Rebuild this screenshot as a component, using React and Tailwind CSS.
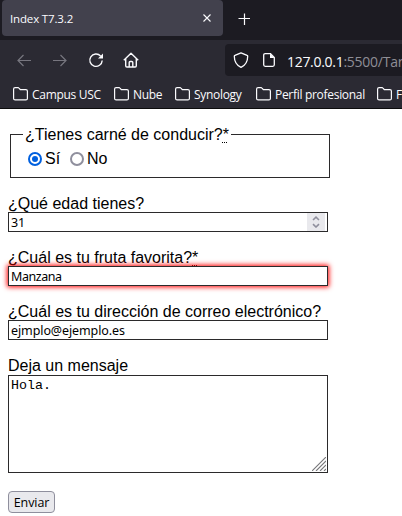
const SANS = "font-['Open_Sans','Noto_Sans',sans-serif]";

function Folder() {
  return (
    <svg className="h-[14px] w-[15px] shrink-0" viewBox="0 0 15 14" fill="none" stroke="#fbfbfe" strokeWidth="1.2">
      <path d="M.6 11.4V2.1Q.6.6 2.1.6H5Q5.600.6 6 1.100L7.300 2.600H12.900Q14.400 2.600 14.400 4.100V11.400Q14.400 12.900 12.900 12.900H2.100Q.6 12.900.6 11.400Z" />
    </svg>
  );
}

function Bookmark({ label, className }) {
  return (
    <div className={`flex h-[18px] shrink-0 items-center gap-1 ${className}`}>
      <Folder />
      <span className="pt-[2px] whitespace-nowrap">{label}</span>
    </div>
  );
}

function Field({ label, required, children }) {
  return (
    <div className="mt-4 flex flex-col">
      <label className="h-[18px] leading-5">
        {label}
        {required && <Required />}
      </label>
      {children}
    </div>
  );
}

function Required() {
  return <abbr className="underline decoration-dotted decoration-1 underline-offset-[2px]">*</abbr>;
}

function Radio({ checked }) {
  return (
    <span className={`flex size-[14px] items-center justify-center rounded-full border-2 bg-white ${checked ? "border-[#0060df]" : "border-[#8f8f9d]"}`}>
      {checked && <span className="size-[6px] rounded-full bg-[#0060df]" />}
    </span>
  );
}

const BOX = "relative h-5 w-[320px] border border-[#2b2a2b] bg-white pl-[2px] text-[12.5px] leading-5 tracking-[-0.1px] font-['Noto_Sans','Open_Sans',sans-serif]";

export default function App() {
  return (
    <div className="h-[516px] w-[402px] overflow-hidden bg-white font-['Liberation_Sans',Arial,sans-serif] text-base text-black">
      <header className={`h-[109px] border-b border-[#0c0c0d] bg-[#2b2a33] text-[#fbfbfe] ${SANS}`}>
        <div className="flex h-10 items-start bg-[#1c1b22] pl-[2px]">
          <div className="flex h-9 w-[221px] items-center justify-between rounded-[4px] bg-[#42414d] pr-3 pl-2">
            <span className="pt-[2px] text-[11.500px] tracking-[-0.15px]">Index T7.3.2</span>
            <svg className="size-2" viewBox="0 0 8 8" stroke="#fbfbfe" strokeWidth="1.1"><path d="M.5.5l7 7M7.500.5l-7 7" /></svg>
          </div>
          <svg className="mt-[13px] ml-[15px] size-3" viewBox="0 0 12 12" stroke="#fbfbfe" strokeWidth="1.2"><path d="M6.500 .5v12M.5 5.500h12" /></svg>
        </div>
        <div className="flex h-10 items-center">
          <svg className="ml-[17px] h-[14px] w-[14px]" viewBox="0 0 14 14" fill="none" stroke="#77767f" strokeWidth="1.2"><path d="M14 7.500H1M6.500 2L1 7.500L6.500 13" /></svg>
          <svg className="ml-[22px] h-[14px] w-[14px]" viewBox="0 0 14 14" fill="none" stroke="#77767f" strokeWidth="1.2"><path d="M0 7.500H13M7.500 2L13 7.500L7.500 13" /></svg>
          <svg className="ml-[21px] h-4 w-4" viewBox="0 0 16 16" fill="none" stroke="#fbfbfe" strokeWidth="1.4"><path d="M12.600 4A6.200 6.200 0 1 0 14.200 8.500" /><path d="M15 1.500V6.500H10Z" fill="#fbfbfe" stroke="none" /></svg>
          <svg className="ml-[19px] h-4 w-4" viewBox="0 0 16 16" fill="none" stroke="#fbfbfe" strokeWidth="1.4" strokeLinejoin="round"><path d="M.8 8.200L8 1.200L15.200 8.200M2.700 6.800V13.800Q2.700 15 3.900 15H12.100Q13.300 15 13.300 13.800V6.800M6.200 15V10.500Q6.200 9.500 7.200 9.500H8.800Q9.800 9.500 9.800 10.500V15" /></svg>
          <div className="ml-[86px] flex h-8 flex-1 items-center overflow-hidden rounded-l-[4px] bg-[#1c1b22] pl-2">
            <svg className="h-4 w-4 shrink-0" viewBox="0 0 16 16" fill="none" stroke="#fbfbfe" strokeWidth="1.3" strokeLinejoin="round"><path d="M8 .8L14.100 3.300Q14.700 3.500 14.700 4.200C14.700 9.500 12.300 13.300 8 15.300C3.700 13.300 1.300 9.500 1.300 4.200Q1.300 3.500 1.900 3.300Z" /></svg>
            <svg className="ml-[14px] h-[14px] w-3 shrink-0" viewBox="0 0 12 14" fill="none" stroke="#fbfbfe" strokeWidth="1.3"><path d="M7.500.7H2.200Q.7.7.7 2.200V11.800Q.7 13.300 2.200 13.300H9.800Q11.300 13.300 11.300 11.800V4.500Z" /><path d="M7 .5V5H11.500Z" fill="#fbfbfe" stroke="none" /></svg>
            <span className="ml-[12px] pt-[2px] text-[14px] tracking-[-0.3px] whitespace-nowrap">127.0.0.1<span className="tracking-[-0.25px] text-[#8f8e96]">:5500/Tare</span></span>
          </div>
        </div>
        <div className="flex h-7 items-center overflow-hidden pl-[13px] text-[12px] tracking-[-0.3px]">
          <Bookmark label="Campus USC" className="w-[101px]" />
          <Bookmark label="Nube" className="w-[61px]" />
          <Bookmark label="Synology" className="w-[81px]" />
          <Bookmark label="Perfil profesional" className="w-[121px]" />
          <Bookmark label="F" className="w-[25px]" />
        </div>
      </header>
      <form className="flex flex-col items-start px-2 pt-[16px]">
        <fieldset className="mx-[2px] h-[53px] w-[320px] border border-[#2b2a2b] pl-[17px]">
          <legend className="-ml-[5px] h-[18px] px-[2px] leading-5">¿Tienes carné de conducir?<Required /></legend>
          <div className="mt-[7px] flex h-[18px] items-center leading-[18px]">
            <Radio checked />
            <span className="ml-[3px] w-[25px]">Sí</span>
            <Radio />
            <span className="ml-[3px]">No</span>
          </div>
        </fieldset>
        <Field label="¿Qué edad tienes?">
          <div className={`${BOX} flex items-start justify-between pr-[2px]`}>
            <span>31</span>
            <span className="flex h-[18px] w-[18px] items-center justify-center bg-[#e9e9ed]">
              <svg className="h-3 w-2" viewBox="0 0 8 12" fill="none" stroke="#8f8f9d" strokeWidth="1.600"><path d="M1 4L4 1.200L7 4M1 8.200L4 11L7 8.200" /></svg>
            </span>
          </div>
        </Field>
        <Field label="¿Cuál es tu fruta favorita?" required>
          <div className={`${BOX} shadow-[0_0_5px_1px_red]`}><span className="tracking-[-0.45px]">Manzana</span></div>
        </Field>
        <Field label="¿Cuál es tu dirección de correo electrónico?">
          <div className={BOX}>ejmplo@ejemplo.es</div>
        </Field>
        <Field label="Deja un mensaje">
          <div className="mt-px flex h-[98px] w-[320px] flex-col justify-between border border-[#2b2a2b] pl-[2px] pt-[2px] font-['Liberation_Mono','Courier_New',monospace] text-[13.333px] leading-[15px]">
            <span>Hola.</span>
            <svg className="mr-px mb-px size-[14px] self-end" viewBox="0 0 14 14" stroke="#77777a" strokeWidth="1.100"><path d="M0 14L14 0M4 14L14 4M8 14L14 8M12 14L14 12" /></svg>
          </div>
        </Field>
        <button type="button" className={`mt-[18px] h-[22px] w-[47px] rounded-[4px] border border-[#8f8f9d] bg-[#e9e9ed] pt-px text-[12.500px] leading-5 tracking-[-0.1px] ${SANS}`}>Enviar</button>
      </form>
    </div>
  );
}
